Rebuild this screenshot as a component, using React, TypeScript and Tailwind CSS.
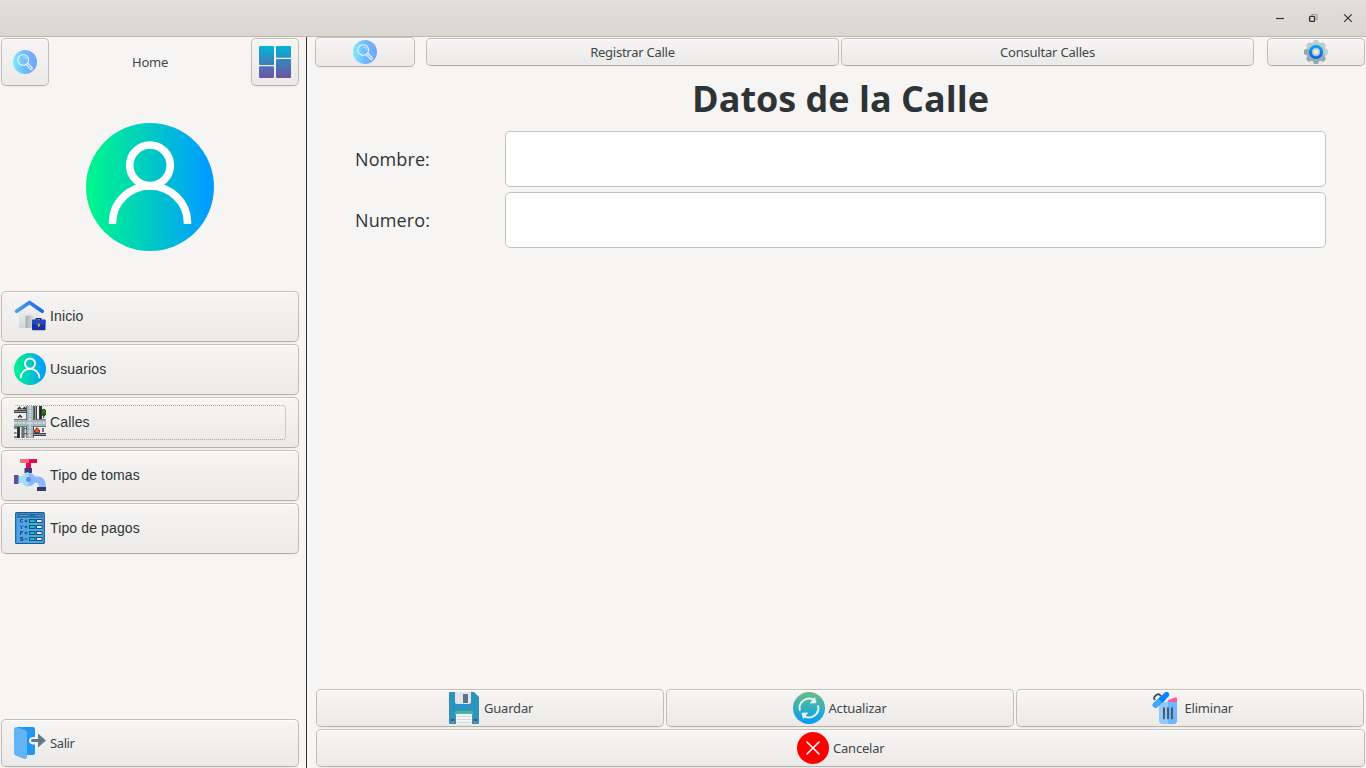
import React from "react";

const BTN =
  "flex shrink-0 items-center rounded-[5px] border border-[#c3bdb6] border-b-[#b8b0a8] bg-gradient-to-b from-[#f6f5f4] to-[#ebeae8] shadow-[inset_0_1px_0_#ffffff,0_1px_1px_rgba(0,0,0,0.04)]";
const UI = "pt-[2px] font-['Noto_Sans',sans-serif] text-[13px] whitespace-nowrap text-[#3f474a]";

function SearchIcon({ id }: { id: string }) {
  return (
    <svg width="24" height="24" viewBox="0 0 24 24" fill="none">
      <defs>
        <linearGradient id={id}>
          <stop offset="0" stopColor="#7eebff" />
          <stop offset=".5" stopColor="#73b9fb" />
          <stop offset="1" stopColor="#6fa5fa" />
        </linearGradient>
      </defs>
      <circle cx="12" cy="12" r="12" fill={`url(#${id})`} />
      <g stroke="#d9effd" strokeWidth="1.3">
        <circle cx="10.2" cy="10" r="5.4" />
        <path d="M10.2 6.7a3.5 3.5 0 0 1 3.4 3.5" strokeWidth=".8" />
        <path d="m13.3 14.6 1.400-1.400 4.400 4.500c.7 1-.6 2.300-1.600 1.500z" />
      </g>
    </svg>
  );
}

function UserIcon({ id, size }: { id: string; size: number }) {
  return (
    <svg width={size} height={size} viewBox="0 0 128 128" fill="none" className="shrink-0">
      <defs>
        <linearGradient id={id}>
          <stop offset="0" stopColor="#00f78b" />
          <stop offset=".5" stopColor="#00cac4" />
          <stop offset=".95" stopColor="#009dff" />
        </linearGradient>
      </defs>
      <circle cx="64" cy="64" r="64" fill={`url(#${id})`} />
      <g stroke="#fff" strokeWidth="7.6">
        <circle cx="64" cy="42.300" r="20.300" />
        <path d="M26.500 101v-1.500a37.500 36.500 0 0 1 75 0v1.500" />
      </g>
    </svg>
  );
}

function DashboardIcon() {
  return (
    <svg width="32" height="32" viewBox="0 0 32 32">
      <defs>
        <linearGradient id="dash" gradientUnits="userSpaceOnUse" x1="0" y1="0" x2="0" y2="32">
          <stop offset="0" stopColor="#00b4d8" />
          <stop offset="1" stopColor="#7252a2" />
        </linearGradient>
      </defs>
      <g fill="url(#dash)">
        <rect width="15" height="19" rx="1" />
        <rect y="20.2" width="15" height="11.8" rx="1" />
        <rect x="17" width="15" height="11.8" rx="1" />
        <rect x="17" y="13" width="15" height="19" rx="1" />
      </g>
    </svg>
  );
}

function HomeIcon() {
  return (
    <svg width="32" height="32" viewBox="0 0 32 32" fill="none">
      <defs>
        <linearGradient id="roof">
          <stop stopColor="#4b9df0" />
          <stop offset="1" stopColor="#2367e8" />
        </linearGradient>
        <linearGradient id="wall" x1="0" y1="0" x2="0" y2="1">
          <stop stopColor="#f5f6f7" />
          <stop offset="1" stopColor="#d2d6d8" />
        </linearGradient>
        <linearGradient id="door">
          <stop stopColor="#a9afb1" />
          <stop offset="1" stopColor="#d5d9da" />
        </linearGradient>
      </defs>
      <path d="M5 11 15 4.500 26 11v17H7q-2 0-2-2z" fill="url(#wall)" />
      <path d="M11.500 28V17q0-1.500 1.500-1.500h4.500q1.500 0 1.500 1.500v11z" fill="url(#door)" />
      <path d="M2.600 11.300 15.500 2.500l12.700 8.800" stroke="url(#roof)" strokeWidth="3.700" strokeLinecap="round" strokeLinejoin="round" />
      <path d="M22.300 20v-1.400h4.600V20" stroke="#172a91" strokeWidth="1.300" />
      <rect x="18" y="19.500" width="13.500" height="10.700" rx="1" fill="#1732a8" />
      <path d="M18 20h13.500v3.500l-4 1.500h-5.500l-4-1.500z" fill="#2349bf" />
      <rect x="23.900" y="23.500" width="1.800" height="3.400" rx=".8" fill="#ffb400" />
    </svg>
  );
}

function StreetsIcon() {
  return (
    <svg width="32" height="32" viewBox="0 0 32 32" fill="none">
      <rect width="32" height="32" rx="1" fill="#eeeeec" />
      <path d="M0 5.500h13M21.500 0v13M26.500 0v13M9 21v11M19 22.500h1M19 28.500h13M4.500 21v11" stroke="#23292b" strokeWidth="2.800" />
      <path d="M0 5.500h13M21.500 0v13M9 21v11M19 28.500h13" stroke="#8f999b" strokeWidth="1.300" />
      <path d="M16 0v32M0 17h32" stroke="#45565a" strokeWidth="7.600" />
      <path d="M16 0v32M0 17h32" stroke="#a9b6b9" strokeWidth="6" />
      <path d="M16 0v32M0 17h32" stroke="#cfe3ea" strokeWidth="1.500" strokeDasharray="3 1" />
      <path d="m3.500 3.500 2-2 2 2m1 0 2-2 1.500 2M4 11.500l2-2 2 2" stroke="#292d2d" strokeWidth="1.400" />
      <path d="M5 3.500h1.500m3 0H11" stroke="#d99b4a" />
      <path d="M5 12h2" stroke="#e9a4be" />
      <path d="M0 22h3M0 27h2.500M0 31h3M29 22v4" stroke="#23292b" strokeWidth="1.200" />
      <path d="M10.500 24.500h2" stroke="#67cee4" strokeWidth="1.500" />
      <path d="M10.500 29.500h2" stroke="#e9a4be" strokeWidth="1.500" />
      <path d="m10 23.500 1.500-1.500 1.500 1.500M10 28.500l1.500-1.500 1.500 1.500" stroke="#292d2d" />
      <ellipse cx="29.700" cy="6.500" rx="2.200" ry="3.200" fill="#3f9a1d" stroke="#172b12" />
      <path d="M29.700 5.500V12" stroke="#1d3014" />
      <path d="m20.500 24 2.500-2.300 2.500 2.300v2.500h-5z" fill="#f05327" stroke="#53211b" strokeWidth=".8" />
    </svg>
  );
}

function TapIcon() {
  return (
    <svg width="32" height="32" viewBox="0 0 32 32">
      <path d="M6 0h8.500v4H6z" fill="#ff6a72" />
      <path d="M14.500 0H23v4h-6v5h-5V4h2.500z" fill="#e60854" />
      <path d="M10.500 9H18v5h-7.500z" fill="#423b76" />
      <path d="M4.500 17.500h3.700A7.500 7.500 0 0 1 21 17.500h3q8 0 8 10.500h-7q0-4.500-4-4.500a7.500 7.500 0 0 1-12.800 0H4.500z" fill="#8bb8ff" />
      <path d="M4.500 17.500h3.700a7.500 7.500 0 0 1 6.300-4.500V28a7.500 7.500 0 0 1-6.300-4.500H4.500z" fill="#a0e0f6" />
      <circle cx="14.500" cy="20.500" r="2.500" fill="#678ae5" />
      <path d="M0 16h4.500v9H0z" fill="#5c519b" />
      <path d="M23 28h9v4h-9z" fill="#3c366e" />
    </svg>
  );
}

function PaymentsIcon() {
  const rows = [8, 14, 20, 26];
  const marks = ["M9 7.500H6.500V10H9", "m6 13.500 1.500 1.500L9 13.500M7.500 15v2", "M9 19.500H6.500V23m0-2h2", "M9 25.500H6.500V27H9v1.500H6.500"];
  return (
    <svg width="32" height="32" viewBox="0 0 32 32" fill="none">
      <rect x="1.700" y=".7" width="28.600" height="30.800" rx="1" fill="#50a4e8" stroke="#155b96" strokeWidth="1.200" />
      <path d="M3 5h26" stroke="#155b96" />
      <g stroke="#174f7e" strokeWidth=".8">
        <rect x="4" y="2.500" width="10" height="1.700" fill="#86b8dc" />
        <rect x="16" y="2.500" width="5" height="1.700" fill="#17a5a0" />
        <rect x="23" y="2.500" width="5" height="1.700" fill="#86b8dc" />
      </g>
      {rows.map((y, i) => (
        <g key={y} stroke="#174f7e">
          <path d={marks[i]} />
          <path d={i === 3 ? `M10.500 ${y + 1}h3` : `M10.500 ${y + 1}h3m-1.500-1.500v3`} />
          <rect x="15.500" y={y - 0.5} width="5.500" height="3" fill="#00cfb1" />
          <rect x="22.500" y={y - 0.5} width="5.500" height="3" fill="#d9f1fd" />
        </g>
      ))}
    </svg>
  );
}

function ExitIcon() {
  return (
    <svg width="32" height="32" viewBox="0 0 32 32" fill="none">
      <path d="M2 0h17q2 0 2 2v8h-2.500q-3.500.5-3.500 3.500t3.500 4H21V26q0 2-2 2h-8V4z" fill="#2196f3" />
      <path d="M0 2q0-2 2-1.700l9 2.600q2 .7 2 2.800v24q0 2.800-3 2l-8-2.900Q0 28 0 26z" fill="#64b5f6" />
      <path d="M18.500 12H24V6.500l8 7-8 7V15h-5.500a1.500 1.500 0 0 1 0-3z" fill="#607d8b" />
    </svg>
  );
}

function GearIcon() {
  return (
    <svg width="24" height="24" viewBox="0 0 24 24" fill="none">
      <defs>
        <linearGradient id="gear" x1="0" y1="0" x2="0" y2="1">
          <stop stopColor="#c2d0d2" />
          <stop offset="1" stopColor="#8da5ac" />
        </linearGradient>
        <linearGradient id="ring" x1="0" y1="0" x2="0" y2="1">
          <stop stopColor="#00a0f7" />
          <stop offset="1" stopColor="#0868ed" />
        </linearGradient>
      </defs>
      <g fill="url(#gear)">
        <circle cx="12" cy="12" r="10" />
        <rect x="9.300" y="0" width="5.400" height="24" rx="1.500" />
        <rect x="9.300" y="0" width="5.400" height="24" rx="1.500" transform="rotate(90 12 12)" />
        <rect x="9.300" y="0" width="5.400" height="24" rx="1.500" transform="rotate(45 12 12)" />
        <rect x="9.300" y="0" width="5.400" height="24" rx="1.500" transform="rotate(-45 12 12)" />
      </g>
      <circle cx="12" cy="12" r="5.600" fill="#a9bcc2" stroke="url(#ring)" strokeWidth="2.900" />
      <circle cx="12" cy="12" r="3.200" fill="#edf0ef" stroke="#b6c6cb" strokeWidth="1.500" />
    </svg>
  );
}

function SaveIcon() {
  return (
    <svg width="32" height="32" viewBox="0 0 32 32">
      <path d="M1 1q0-1 1-1h24l5 5v26q0 1-1 1H2q-1 0-1-1z" fill="#2c92bf" />
      <path d="M7 0h16v10q0 2-2 2H9q-2 0-2-2z" fill="#dfe5e8" />
      <path d="M15 2h5v9h-5z" fill="#607580" />
      <path d="M7 19h18v4H7z" fill="#4bb89a" />
      <path d="M8 22h16v10H8z" fill="#f2f4f5" />
      <path d="M9 24h14v1H9zm0 3h14v1H9zm0 3h14v1H9z" fill="#d2d9dd" />
      <path d="M3 27h3v4H3zm23 0h3v4h-3z" fill="#34556b" />
      <path d="M3 29h3v2H3zm23 0h3v2h-3z" fill="#788c99" />
    </svg>
  );
}

function RefreshIcon() {
  return (
    <svg width="32" height="32" viewBox="0 0 32 32" fill="none">
      <defs>
        <linearGradient id="refresh" x1="0" y1="0" x2="0" y2="1">
          <stop stopColor="#6abd83" />
          <stop offset=".5" stopColor="#35afbd" />
          <stop offset="1" stopColor="#009bff" />
        </linearGradient>
      </defs>
      <circle cx="16" cy="16" r="16" fill="url(#refresh)" />
      <path d="M7 18.800A9.500 9.500 0 0 1 20.500 7.700M25 13.200A9.500 9.500 0 0 1 11.500 24.300" stroke="#e3f5f5" strokeWidth="2" />
      <path d="m21.400 5.300 1.400 5.400-5.600.2M10.600 26.700l-1.400-5.400 5.600-.2" fill="#e3f5f5" stroke="#e3f5f5" strokeWidth="1.200" strokeLinejoin="round" />
    </svg>
  );
}

function TrashIcon() {
  return (
    <svg width="32" height="32" viewBox="0 0 32 32" fill="none">
      <path d="M18.500 11V8.500L25 5.800q3-1 3 1V11z" fill="#ff5a94" />
      <path d="M10 10h18v18q0 4-4 4H14q-4 0-4-4z" fill="#91caff" />
      <path d="M19 10h9v18q0 4-4 4h-5z" fill="#6eb6ff" />
      <path d="M15 16v10.500M19 16v10.500M23 16v10.500" stroke="#414952" strokeWidth="1.700" strokeLinecap="round" />
      <path d="m6 8-.8-1.200Q4.500 5.500 6 4.300l2-1.700Q9.500 1.500 10.800 3l1 1" stroke="#414952" strokeWidth="1.800" />
      <path d="M6.500 13 17.500 2.700" stroke="#0a83ff" strokeWidth="5.400" strokeLinecap="round" />
      <path d="M6.500 13l3.500-3.300" stroke="#42a8ff" strokeWidth="5.400" strokeLinecap="round" />
      <path d="m9.500 6.500 4 4.300 3.500-3.300-4-4.300z" fill="#0a83ff" />
    </svg>
  );
}

function CancelIcon() {
  return (
    <svg width="32" height="32" viewBox="0 0 32 32">
      <circle cx="16" cy="16" r="16" fill="#ff0000" />
      <path d="m10 10 12 12m0-12L10 22" stroke="#fff" strokeWidth="1.600" strokeLinecap="round" />
    </svg>
  );
}

function TitleBar() {
  return (
    <header className="flex h-[37px] shrink-0 items-center justify-end border-b border-[#bfb8b1] bg-gradient-to-b from-[#e1dedb] to-[#dad6d1] pr-[10px]">
      <svg width="84" height="16" viewBox="0 0 84 16" fill="none" stroke="#2e3436" strokeWidth="1.200">
        <path d="M4 8.500h8" />
        <path d="M39.800 5.800V5q0-.5.5-.5h4q.7 0 .7.700v4q0 .500-.5.500H44" stroke="#a0a09d" />
        <rect x="37.600" y="6.400" width="5" height="5" rx="1.200" strokeWidth="1.400" />
        <path d="m72.200 4.300 7.500 7.500m0-7.500-7.500 7.500" />
      </svg>
    </header>
  );
}

const NAV: { label: string; icon: React.ReactNode; focused?: boolean }[] = [
  { label: "Inicio", icon: <HomeIcon /> },
  { label: "Usuarios", icon: <UserIcon id="user-small" size={32} /> },
  { label: "Calles", icon: <StreetsIcon />, focused: true },
  { label: "Tipo de tomas", icon: <TapIcon /> },
  { label: "Tipo de pagos", icon: <PaymentsIcon /> },
];

function Sidebar() {
  return (
    <aside className="flex w-[307px] shrink-0 flex-col border-r border-[#2e3436] pt-px pr-[7px] pb-px pl-px">
      <div className="flex h-12 shrink-0 items-center justify-between">
        <button className={`${BTN} size-12 justify-center`}><SearchIcon id="search-side" /></button>
        <span className={`${UI} tracking-[-0.25px]`}>Home</span>
        <button className={`${BTN} size-12 justify-center`}><DashboardIcon /></button>
      </div>
      <div className="mt-[37px] flex justify-center"><UserIcon id="user-large" size={128} /></div>
      <nav className="mt-10 flex flex-col gap-[2px]">
        {NAV.map((item) => (
          <button key={item.label} className={`${BTN} h-[51px] px-3`}>
            <span className={`flex h-[35px] w-full items-center gap-1 rounded-[3px] border border-dotted pr-1 pb-[2px] ${item.focused ? "border-[#aaa7a3]" : "border-transparent"}`}>
              <span className="-ml-px grid size-8 shrink-0 place-items-center">{item.icon}</span>
              <span className="font-['Liberation_Sans',sans-serif] text-[14px] leading-4 tracking-[0.13px] whitespace-nowrap text-[#2e3436]">{item.label}</span>
            </span>
          </button>
        ))}
      </nav>
      <button className={`${BTN} mt-auto h-12 gap-1 pl-3`}>
        <ExitIcon />
        <span className={`${UI} tracking-[-0.4px]`}>Salir</span>
      </button>
    </aside>
  );
}

function Field({ label }: { label: string }) {
  return (
    <label className="flex h-14 items-center">
      <span className="w-[150px] shrink-0 font-['Open_Sans',sans-serif] text-[18px] tracking-[0.1px] text-[#2e3436]">{label}</span>
      <input className="h-14 min-w-0 flex-1 rounded-[5px] border border-[#c5c1ba] bg-white px-3 outline-none" />
    </label>
  );
}

function Action({ label, icon, width }: { label: string; icon: React.ReactNode; width: string }) {
  return (
    <button className={`${BTN} h-[38px] flex-1 justify-center gap-1`}>
      {icon}
      <span className={`${UI} ${width} text-left tracking-[-0.2px]`}>{label}</span>
    </button>
  );
}

export default function App() {
  return (
    <div className="flex h-screen w-screen flex-col overflow-hidden bg-[#f6f5f4]">
      <TitleBar />
      <div className="flex min-h-0 flex-1">
        <Sidebar />
        <main className="flex min-w-0 flex-1 flex-col pr-px pb-px pl-2">
          <div className="flex h-[30px] shrink-0">
            <button className={`${BTN} mr-[11px] h-[30px] w-[100px] justify-center`}><SearchIcon id="search-main" /></button>
            <button className={`${BTN} mt-px mr-[2px] h-7 w-[413px] justify-center`}>
              <span className={`${UI} tracking-[-0.25px]`}>Registrar Calle</span>
            </button>
            <button className={`${BTN} mt-px mr-[13px] h-7 w-[413px] justify-center`}>
              <span className={`${UI} tracking-[-0.2px]`}>Consultar Calles</span>
            </button>
            <button className={`${BTN} mt-px h-7 w-[98px] justify-center`}><GearIcon /></button>
          </div>
          <h1 className="mt-[7px] pl-px text-center font-['Open_Sans',sans-serif] text-[36px] leading-[50px] font-bold text-[#2e3436]">Datos de la Calle</h1>
          <div className="mt-[7px] mr-[39px] ml-10 flex flex-col gap-[5px]">
            <Field label="Nombre:" />
            <Field label="Numero:" />
          </div>
          <footer className="mt-auto ml-px flex flex-col gap-[2px]">
            <div className="mr-px flex gap-[2px]">
              <Action label="Guardar" icon={<SaveIcon />} width="w-[48px]" />
              <Action label="Actualizar" icon={<RefreshIcon />} width="w-[59px]" />
              <Action label="Eliminar" icon={<TrashIcon />} width="w-[47px]" />
            </div>
            <div className="flex"><Action label="Cancelar" icon={<CancelIcon />} width="w-[51px]" /></div>
          </footer>
        </main>
      </div>
    </div>
  );
}
